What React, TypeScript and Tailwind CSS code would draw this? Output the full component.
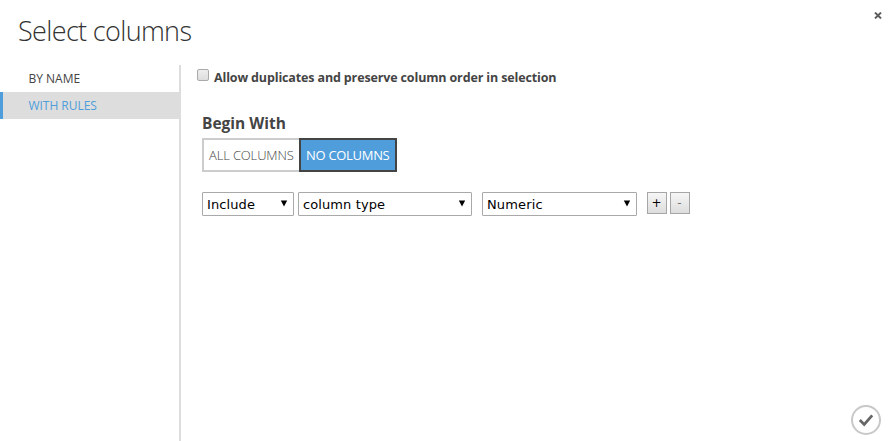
import React from 'react';

function RuleSelect({ label, className, textClass }: { label: string; className: string; textClass: string }) {
  return (
    <button
      className={`flex h-6 items-center justify-between border border-[#a9a9a9] rounded-[1px] bg-white pl-1 pr-[5px] font-['DejaVu_Sans',sans-serif] text-[13px] leading-none text-black ${className}`}
    >
      <span className={`whitespace-nowrap ${textClass}`}>{label}</span>
      <svg width="8" height="7" viewBox="0 0 8 7" className="-mt-px">
        <path d="M0.8 0.5H7.2L4 6.5Z" fill="#000" />
      </svg>
    </button>
  );
}

function SmallButton({ label, className }: { label: string; className: string }) {
  return (
    <button
      className={`flex h-[22px] w-5 items-center justify-center border border-[#a6a6a6] bg-linear-to-b from-[#f6f6f6] to-[#dddddd] pr-px font-['DejaVu_Sans',sans-serif] text-[12px] leading-none ${className}`}
    >
      {label}
    </button>
  );
}

export default function App() {
  return (
    <div className="flex h-[441px] w-[895px] flex-col overflow-hidden bg-white font-['Open_Sans',sans-serif] text-[#444]">
      <header className="flex h-[65px] shrink-0 justify-between pl-[18px] pr-[13px]">
        <h1 className="mt-[13px] whitespace-nowrap text-[27px] font-light leading-9 tracking-[-0.65px] text-[#333]">
          Select columns
        </h1>
        <button aria-label="Close" className="mt-3 h-[7px] w-2">
          <svg width="8" height="7" viewBox="0 0 8 7">
            <path d="M1 .6L7 6.4M7 .6L1 6.4" stroke="#5c5c5c" strokeWidth="2" />
          </svg>
        </button>
      </header>
      <div className="flex min-h-0 flex-1">
        <nav className="w-[181px] shrink-0 border-r-2 border-[#ddd] text-[12px]">
          <div className="flex h-[27px] items-center pl-[28.5px]">
            <span className="whitespace-nowrap">BY NAME</span>
          </div>
          <div className="flex h-[27px] items-center border-l-3 border-[#4f9ddb] bg-[#ddd] pl-[25.5px] text-[#4f9ddb]">
            <span className="whitespace-nowrap tracking-[-0.03px]">WITH RULES</span>
          </div>
        </nav>
        <main className="flex flex-1 flex-col pl-4">
          <label className="flex h-6 items-center">
            <span className="-mt-1 h-3 w-3 rounded-[2px] border border-[#aaa] bg-linear-to-b from-[#eee] to-[#ddd]" />
            <span className="ml-[5px] mt-0.5 whitespace-nowrap text-[12.5px] font-bold tracking-[-0.14px]">
              Allow duplicates and preserve column order in selection
            </span>
          </label>
          <section className="pl-[5px]">
            <h2 className="mt-[21px] h-[28px] whitespace-nowrap text-[15.5px] font-bold leading-[26px]">Begin With</h2>
            <div className="flex h-[34px] text-[13px]">
              <button className="flex w-[97px] items-center border-2 border-r-0 border-[#ccc] pl-[5px] pt-0.5 font-light">
                <span className="whitespace-nowrap tracking-[-0.15px]">ALL COLUMNS</span>
              </button>
              <button className="flex w-[98px] items-center border-2 border-[#444] bg-[#4f9ddb] pl-[5px] pt-0.5 text-white">
                <span className="whitespace-nowrap tracking-[-0.3px]">NO COLUMNS</span>
              </button>
            </div>
            <div className="mt-5 flex items-start">
              <RuleSelect label="Include" className="w-[92px]" textClass="tracking-[0.1px]" />
              <RuleSelect label="column type" className="ml-1 w-[174px]" textClass="tracking-[0.1px]" />
              <RuleSelect label="Numeric" className="ml-[10px] w-[155px]" textClass="tracking-[0.15px]" />
              <SmallButton label="+" className="ml-[10px] text-black" />
              <SmallButton label="-" className="ml-[3px] text-[#777]" />
            </div>
          </section>
          <button aria-label="Confirm" className="mb-[5px] mr-[13px] mt-auto self-end">
            <svg width="32" height="32" viewBox="0 0 32 32" fill="none">
              <circle cx="16" cy="16" r="14" stroke="#c8c8c8" strokeWidth="2" />
              <path d="M9.8 16L14.2 20.5L22.2 11.3" stroke="#666" strokeWidth="2.7" />
            </svg>
          </button>
        </main>
      </div>
    </div>
  );
}
